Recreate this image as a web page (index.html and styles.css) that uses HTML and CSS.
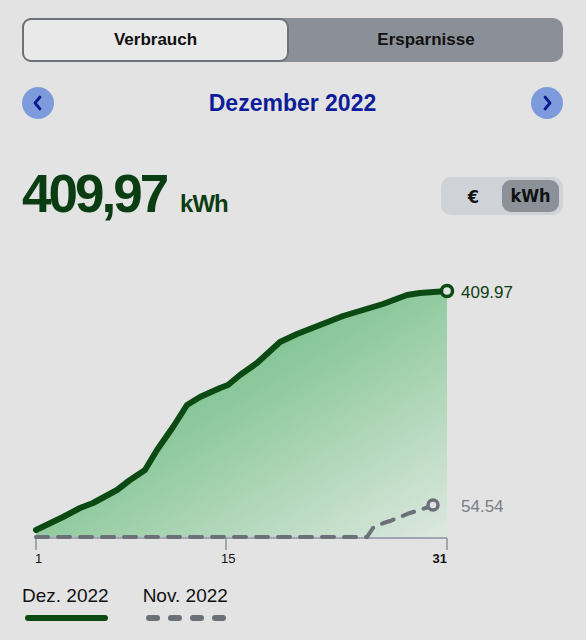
FILE: index.html
```html
<!DOCTYPE html>
<html lang="de">
<head>
  <meta charset="UTF-8" />
  <meta name="viewport" content="width=device-width, initial-scale=1.0"/>
  <title>Verbrauch</title>
  <link rel="stylesheet" href="styles.css">
</head>
<body>

  <div class="top">
    <div class="segment">
      <div class="seg-item active">Verbrauch</div>
      <div class="seg-item">Ersparnisse</div>
    </div>

    <div class="month-nav">
      <button class="nav-btn" aria-label="Vorheriger Monat">
        <svg width="12" height="16" viewBox="0 0 12 16"><path d="M8 2 L3 8 L8 14" fill="none" stroke="#0a1c8c" stroke-width="2.8" stroke-linecap="round" stroke-linejoin="round"/></svg>
      </button>
      <div class="month">Dezember 2022</div>
      <button class="nav-btn" aria-label="Nächster Monat">
        <svg width="12" height="16" viewBox="0 0 12 16"><path d="M4 2 L9 8 L4 14" fill="none" stroke="#0a1c8c" stroke-width="2.8" stroke-linecap="round" stroke-linejoin="round"/></svg>
      </button>
    </div>

    <div class="stats">
      <div class="total">
        <span class="total-value">409,97</span>
        <span class="total-unit">kWh</span>
      </div>
      <div class="unit-toggle">
        <span class="unit">€</span>
        <span class="unit active">kWh</span>
      </div>
    </div>
  </div>

  <svg class="chart" width="586" height="345" viewBox="0 230 586 345">
    <defs>
      <linearGradient id="area" x1="0" y1="0" x2="1" y2="1">
        <stop offset="0" stop-color="#56ad72"/>
        <stop offset="0.5" stop-color="#92cba0"/>
        <stop offset="1" stop-color="#dde8df"/>
      </linearGradient>
    </defs>

    <!-- Dezember area + line -->
    <path d="M36 530 L63 517 L80 508 L93 503 L117 490 L130 480 L145 470 L157 450 L173 427 L187 405 L200 397 L220 388 L228 385 L240 375 L257 363 L280 342 L297 334 L320 325 L343 316 L373 307 L383 304 L407 295 L420 293 L447 291 L447 537 L36 537 Z" fill="url(#area)"/>
    <path d="M36 530 L63 517 L80 508 L93 503 L117 490 L130 480 L145 470 L157 450 L173 427 L187 405 L200 397 L220 388 L228 385 L240 375 L257 363 L280 342 L297 334 L320 325 L343 316 L373 307 L383 304 L407 295 L420 293 L447 291" fill="none" stroke="#0b4a12" stroke-width="6" stroke-linejoin="round" stroke-linecap="round"/>

    <!-- axis -->
    <path d="M36 538 L447 538 M36 538 L36 550 M226 538 L226 550 M447 538 L447 550" stroke="#8e93a3" stroke-width="1.5" fill="none"/>

    <!-- November line -->
    <path d="M36 537 L367 537 L373 528 Q380 524 390 521 L410 513 L429 507" fill="none" stroke="#6b7079" stroke-width="4" stroke-dasharray="12 10" stroke-linecap="round"/>
    <circle cx="433" cy="505" r="5" fill="#e3e3e3" stroke="#6b7079" stroke-width="3.5"/>

    <circle cx="447" cy="291" r="5.5" fill="#e3e3e3" stroke="#0b4a12" stroke-width="3.5"/>

    <text class="end-label dez" x="461" y="298">409.97</text>
    <text class="end-label nov" x="461" y="512">54.54</text>

    <text class="tick" x="35" y="563">1</text>
    <text class="tick" x="221" y="563">15</text>
    <text class="tick bold" x="447" y="563" text-anchor="end">31</text>
  </svg>

  <div class="legend">
    <div class="legend-item">
      <div class="legend-label">Dez. 2022</div>
      <div class="legend-line solid"></div>
    </div>
    <div class="legend-item">
      <div class="legend-label">Nov. 2022</div>
      <div class="legend-line dashed">
        <span></span><span></span><span></span><span></span>
      </div>
    </div>
  </div>

</body>
</html>
```

FILE: styles.css
```css
* {
  margin: 0;
  padding: 0;
  box-sizing: border-box;
}

body {
  font-family: 'Liberation Sans', Arial, sans-serif;
  background-color: #e3e3e3;
  color: #111;
}

.top {
  padding: 18px 23px 0 22px;
}

/* segmented control */
.segment {
  display: flex;
  height: 44px;
  background-color: #8b8f97;
  border-radius: 10px;
}

.seg-item {
  flex: 1;
  display: flex;
  align-items: center;
  justify-content: center;
  font-size: 17px;
  font-weight: bold;
  color: #111;
}

.seg-item.active {
  flex: 0 0 267px;
  background-color: #e9e9e9;
  border: 2px solid #6e7178;
  border-radius: 9px;
}

/* month navigation */
.month-nav {
  display: flex;
  align-items: center;
  justify-content: space-between;
  margin-top: 25px;
  height: 32px;
}

.nav-btn {
  width: 32px;
  height: 32px;
  border: none;
  border-radius: 50%;
  background-color: #7d9bdc;
  display: flex;
  align-items: center;
  justify-content: center;
  cursor: pointer;
}

.month {
  font-size: 23px;
  font-weight: bold;
  color: #0d1d9a;
}

/* total + unit toggle */
.stats {
  display: flex;
  align-items: center;
  justify-content: space-between;
  margin-top: 57px;
  height: 40px;
}

.total {
  display: flex;
  align-items: baseline;
  gap: 14px;
  margin-bottom: 5px;
  color: #0b3d12;
  font-weight: bold;
}

.total-value {
  font-size: 53px;
  letter-spacing: -3px;
}

.total-unit {
  font-size: 24px;
  letter-spacing: -1px;
}

.unit-toggle {
  display: flex;
  align-items: center;
  width: 122px;
  height: 38px;
  padding: 3px 4px;
  background-color: #cfd2d6;
  border-radius: 10px;
}

.unit {
  flex: 1;
  text-align: center;
  font-family: 'DejaVu Sans Condensed', sans-serif;
  font-weight: bold;
  font-size: 18px;
  color: #111;
}

.unit.active {
  flex: 0 0 57px;
  height: 32px;
  line-height: 32px;
  background-color: #8b9099;
  border-radius: 9px;
}

/* chart */
.chart {
  display: block;
  margin-top: 14px;
}

.end-label {
  font-size: 17px;
}

.end-label.dez {
  fill: #0d3d14;
}

.end-label.nov {
  fill: #7a7f87;
}

.tick {
  font-size: 13px;
  fill: #111;
}

.tick.bold {
  font-weight: bold;
}

/* legend */
.legend {
  display: flex;
  gap: 34px;
  padding: 10px 0 0 22px;
}

.legend-label {
  font-size: 19px;
  color: #111;
}

.legend-line {
  margin: 8px 0 0 3px;
  width: 83px;
  height: 6px;
}

.legend-line.solid {
  background-color: #0b4a12;
  border-radius: 3px;
}

.legend-line.dashed {
  display: flex;
  gap: 8px;
}

.legend-line.dashed span {
  width: 14px;
  height: 6px;
  background-color: #6b7079;
  border-radius: 3px;
}
```
